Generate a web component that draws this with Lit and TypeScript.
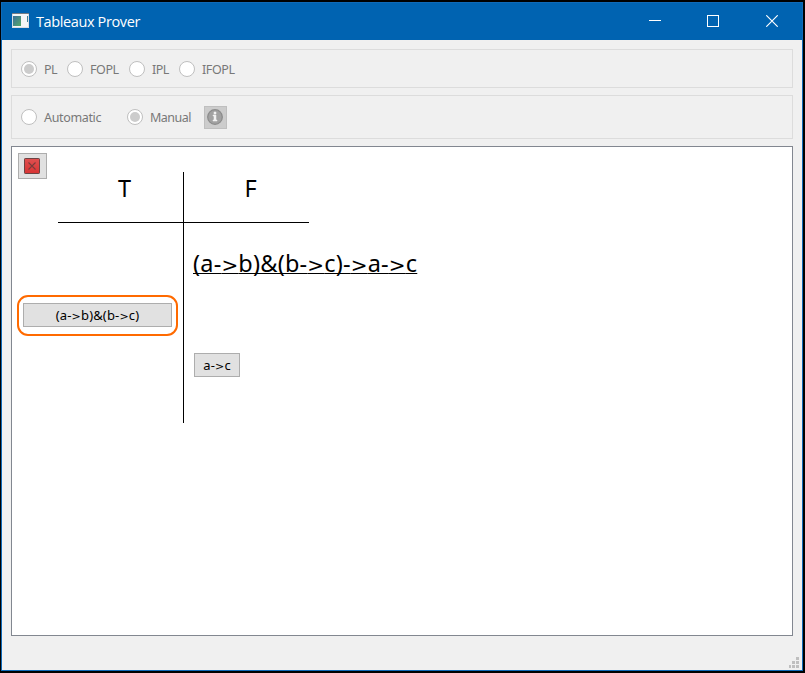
import { LitElement, html, css, svg } from "lit";
import { customElement, property } from "lit/decorators.js";

@customElement("radio-option")
class RadioOption extends LitElement {
  @property() label = "";
  @property({ type: Boolean }) checked = false;

  static styles = css`
    :host { display: flex; align-items: center; gap: 7px; flex: none; }
    .ring { box-sizing: border-box; width: 16px; height: 16px; flex: none; border: 1px solid #bfbfbf; border-radius: 50%; background: #fff; display: grid; place-items: center; }
    .dot { width: 10px; height: 10px; border-radius: 50%; background: #ccc; }
    .label { font: 12.5px/16px "Noto Sans", sans-serif; padding-top: 2px; color: #787878; white-space: nowrap; letter-spacing: var(--track, 0px); }
  `;

  render() {
    return html`<span class="ring">${this.checked ? html`<span class="dot"></span>` : ""}</span><span class="label">${this.label}</span>`;
  }
}

@customElement("app-root")
class AppRoot extends LitElement {
  static styles = css`
    :host { display: block; box-sizing: border-box; width: 805px; height: 673px; padding: 2px 2px 2px 1px; background: #000; overflow: hidden; font-family: "Noto Sans", sans-serif; }
    .window { box-sizing: border-box; height: 669px; border: 1px solid #0f6ab8; background: #f0f0f0; display: flex; flex-direction: column; position: relative; }
    .titlebar { height: 37px; flex: none; background: #0063b1; display: flex; align-items: center; color: #fff; }
    .logo { margin: -2px 0 0 10px; width: 17px; height: 15px; display: block; }
    .title { margin-left: 7px; flex: 1; font: 14.5px/20px "Open Sans", sans-serif; letter-spacing: -0.38px; }
    .controls { display: flex; gap: 46px; margin: -1px 24px 0 0; }
    .controls svg { display: block; width: 12px; height: 12px; }
    .controls svg:last-child { margin-left: 1px; }
    .body { flex: 1; display: flex; flex-direction: column; padding: 9px 9px 34px; }
    .group { box-sizing: border-box; border: 1px solid #dcdcdc; display: flex; align-items: center; padding-left: 9px; flex: none; }
    .logic { height: 39px; margin-bottom: 7px; }
    .mode { height: 44px; margin-bottom: 7px; }
    .pl { width: 46px; --track: -0.5px; }
    .fopl { width: 62px; --track: -0.4px; }
    .ipl { width: 50px; --track: -0.5px; }
    .ifopl { --track: -0.4px; }
    .auto { width: 106px; --track: -0.35px; }
    .manual { width: 77px; --track: -0.5px; }
    .info { box-sizing: border-box; width: 23px; height: 23px; border: 1px solid #bfbfbf; background: #ccc; display: flex; padding: 2px; }
    .info svg { display: block; }
    .canvas { box-sizing: border-box; flex: 1; border: 1px solid #828790; background: #fff; position: relative; padding-top: 25px; color: #000; }
    .btn { box-sizing: border-box; border: 1px solid #adadad; background: #e1e1e1; display: flex; justify-content: center; font-size: 13px; line-height: 22px; letter-spacing: 0.15px; white-space: nowrap; }
    .gt { font-family: "DejaVu Sans", sans-serif; font-size: 0.85em; line-height: 1; }
    .close { position: absolute; left: 6px; top: 6px; width: 29px; height: 26px; padding: 4px 0 0 5px; justify-content: flex-start; }
    .close svg { display: block; }
    .tableau { display: grid; grid-template-columns: 171px 1fr; height: 251px; }
    .side { display: flex; flex-direction: column; }
    .false-side { border-left: 1px solid #000; }
    .head { box-sizing: border-box; height: 51px; border-bottom: 1px solid #000; text-align: center; font-size: 23.5px; line-height: 33px; }
    .true-side .head { margin-left: 46px; padding-left: 8px; }
    .false-side .head { width: 125px; padding-left: 8px; }
    .formula { align-self: flex-start; margin: 24px 0 0 9px; height: 33px; font-size: 23.5px; line-height: 33px; white-space: nowrap; letter-spacing: 0.2px; text-decoration: underline; text-decoration-thickness: 1px; text-underline-offset: 1px; text-decoration-skip-ink: none; }
    .mark { box-sizing: border-box; width: 161px; height: 41px; margin: 72px 0 0 5px; border: 2px solid #ff6a00; border-radius: 11px; padding: 6px 4px; }
    .wide { width: 149px; height: 24px; }
    .small { width: 46px; height: 24px; margin: 73px 0 0 10px; }
    .grip { position: absolute; right: 3px; bottom: 2px; width: 11px; height: 11px; display: block; }
  `;

  private logo = svg`<svg class="logo" viewBox="0 0 17 15" shape-rendering="crispEdges">
    <defs><linearGradient id="g" x2="1" y2="1"><stop stop-color="#3b6f9c"/><stop offset="1" stop-color="#56a868"/></linearGradient></defs>
    <rect width="17" height="15" fill="#d9dde2"/><rect width="17" height="1" fill="#737b84"/>
    <rect x="1" y="1" width="15" height="13" fill="#f5f6f7"/>
    <rect x="1" y="3" width="8" height="10" fill="url(#g)"/><rect x="15" y="3" width="1" height="6" fill="#427f93"/>
  </svg>`;

  private formula(text: string) {
    return html`<span>${text.split(/(>)/).map((part) => (part === ">" ? html`<span class="gt">&gt;</span>` : part))}</span>`;
  }

  render() {
    return html`<div class="window">
      <div class="titlebar">
        ${this.logo}
        <span class="title">Tableaux Prover</span>
        <div class="controls">
          <svg viewBox="0 0 12 12"><path d="M0 5.5H12" stroke="#fff"/></svg>
          <svg viewBox="0 0 12 12"><rect x=".5" y=".5" width="11" height="11" fill="none" stroke="#fff"/></svg>
          <svg viewBox="0 0 12 12"><path d="M.3 .3L11.7 11.7M11.7 .3L.3 11.7" stroke="#fff" stroke-width="1.15"/></svg>
        </div>
      </div>
      <div class="body">
        <div class="group logic">
          <radio-option class="pl" label="PL" checked></radio-option>
          <radio-option class="fopl" label="FOPL"></radio-option>
          <radio-option class="ipl" label="IPL"></radio-option>
          <radio-option class="ifopl" label="IFOPL"></radio-option>
        </div>
        <div class="group mode">
          <radio-option class="auto" label="Automatic"></radio-option>
          <radio-option class="manual" label="Manual" checked></radio-option>
          <div class="info"><svg width="16" height="16" viewBox="0 0 16 16">
            <circle cx="8" cy="8" r="7.3" fill="#a2a2a2" stroke="#8c8c8c" stroke-width="1.3"/>
            <path d="M7 3h2v2H7zM6 6h3v5h1v1H6v-1h1V7H6z" fill="#f2f2f2" stroke="#f2f2f2" stroke-width=".5"/></svg></div>
        </div>
        <div class="canvas">
          <div class="btn close"><svg width="16" height="16" viewBox="0 0 16 16">
            <defs><linearGradient id="r" x2="0" y2="1"><stop stop-color="#e05050"/><stop offset="1" stop-color="#d83434"/></linearGradient></defs>
            <rect x=".5" y=".5" width="15" height="15" rx=".7" fill="url(#r)" stroke="#6b4444"/>
            <path d="M4.5 4.5l7 7M11.5 4.5l-7 7" stroke="#7a3c3c" stroke-width="1.1"/></svg></div>
          <div class="tableau">
            <div class="side true-side">
              <div class="head">T</div>
              <div class="mark"><div class="btn wide">${this.formula("(a->b)&(b->c)")}</div></div>
            </div>
            <div class="side false-side">
              <div class="head">F</div>
              <div class="formula">${this.formula("(a->b)&(b->c)->a->c")}</div>
              <div class="btn small">${this.formula("a->c")}</div>
            </div>
          </div>
        </div>
      </div>
      <svg class="grip" viewBox="0 0 11 11" fill="#bfbfbf" shape-rendering="crispEdges"><path d="M8 0h3v3H8zM4 4h3v3H4zM8 4h3v3H8zM1 8h2v3H1zM4 8h3v3H4zM8 8h3v3H8z"/></svg>
    </div>`;
  }
}
